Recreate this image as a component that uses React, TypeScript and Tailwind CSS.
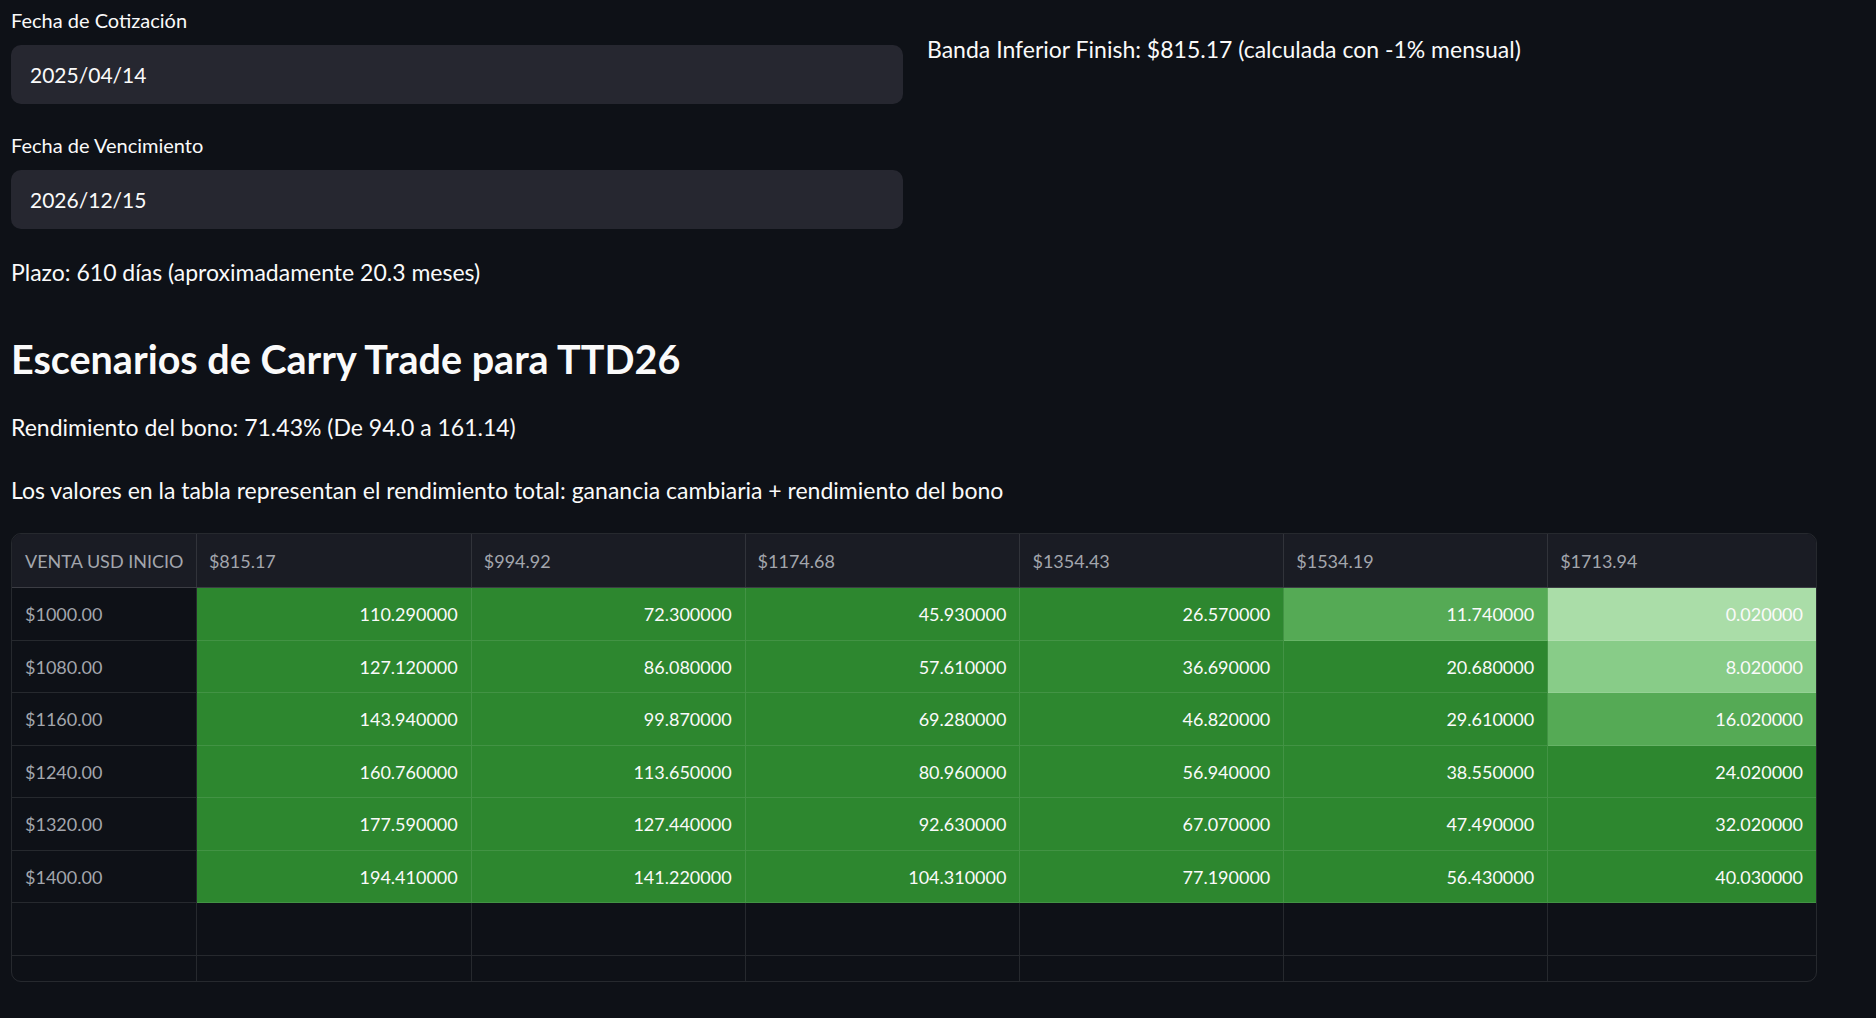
import React from "react";

const cols = ["$815.17", "$994.92", "$1174.68", "$1354.43", "$1534.19", "$1713.94"];
const widths = [185, 275, 274, 275, 264, 264, 268];

type Cell = { v: string; c: string };
const D = "bg-[#2d872f]";
const M = "bg-[#55aa55]";
const L1 = "bg-[#88cc88]";
const L2 = "bg-[#aadda8]";

const rows: { label: string; cells: Cell[] }[] = [
  {
    label: "$1000.00",
    cells: [
      { v: "110.290000", c: D },
      { v: "72.300000", c: D },
      { v: "45.930000", c: D },
      { v: "26.570000", c: D },
      { v: "11.740000", c: M },
      { v: "0.020000", c: L2 },
    ],
  },
  {
    label: "$1080.00",
    cells: [
      { v: "127.120000", c: D },
      { v: "86.080000", c: D },
      { v: "57.610000", c: D },
      { v: "36.690000", c: D },
      { v: "20.680000", c: D },
      { v: "8.020000", c: L1 },
    ],
  },
  {
    label: "$1160.00",
    cells: [
      { v: "143.940000", c: D },
      { v: "99.870000", c: D },
      { v: "69.280000", c: D },
      { v: "46.820000", c: D },
      { v: "29.610000", c: D },
      { v: "16.020000", c: M },
    ],
  },
  {
    label: "$1240.00",
    cells: [
      { v: "160.760000", c: D },
      { v: "113.650000", c: D },
      { v: "80.960000", c: D },
      { v: "56.940000", c: D },
      { v: "38.550000", c: D },
      { v: "24.020000", c: D },
    ],
  },
  {
    label: "$1320.00",
    cells: [
      { v: "177.590000", c: D },
      { v: "127.440000", c: D },
      { v: "92.630000", c: D },
      { v: "67.070000", c: D },
      { v: "47.490000", c: D },
      { v: "32.020000", c: D },
    ],
  },
  {
    label: "$1400.00",
    cells: [
      { v: "194.410000", c: D },
      { v: "141.220000", c: D },
      { v: "104.310000", c: D },
      { v: "77.190000", c: D },
      { v: "56.430000", c: D },
      { v: "40.030000", c: D },
    ],
  },
];

function Label({ children }: { children: React.ReactNode }) {
  return <div className="h-[41px] text-[20px] leading-[41px] text-[#fafafa]">{children}</div>;
}

function DateInput({ value }: { value: string }) {
  return (
    <div className="mt-[4px] flex h-[59px] items-center rounded-[10px] bg-[#262730] pl-[19px] text-[21px] text-[#fafafa]">
      {value}
    </div>
  );
}

export default function App() {
  return (
    <div
      className="min-h-screen w-full bg-[#0e1117] text-[#fafafa]"
      style={{ fontFamily: "Lato, 'Noto Sans', sans-serif" }}
    >
      <div className="w-[1818px] pl-[11px]">
        <div className="flex gap-[24px]">
          <div className="w-[892px]">
            <Label>Fecha de Cotización</Label>
            <DateInput value="2025/04/14" />
            <div className="mt-[21px]">
              <Label>Fecha de Vencimiento</Label>
            </div>
            <DateInput value="2026/12/15" />
            <div className="mt-[27px] h-[33px] text-[23px] leading-[33px]">
              Plazo: 610 días (aproximadamente 20.3 meses)
            </div>
          </div>
          <div className="flex-1 pt-[33px]">
            <div className="h-[33px] text-[23px] leading-[33px]">
              Banda Inferior Finish: $815.17 (calculada con -1% mensual)
            </div>
          </div>
        </div>

        <h3 className="mt-[45px] h-[50px] text-[39.5px] font-bold leading-[50px]">
          Escenarios de Carry Trade para TTD26
        </h3>
        <div className="mt-[27px] h-[33px] text-[23px] leading-[33px]">
          Rendimiento del bono: 71.43% (De 94.0 a 161.14)
        </div>
        <div className="mt-[30px] h-[33px] text-[23px] leading-[33px]">
          Los valores en la tabla representan el rendimiento total: ganancia cambiaria + rendimiento del bono
        </div>

        <div className="mt-[26px] h-[449px] w-[1806px] overflow-hidden rounded-[10px] border border-white/10 text-[18px]">
          <div className="flex h-[54px] border-b border-white/15 bg-[#1a1c24]">
            <div
              className="flex items-center border-r border-white/10 pl-[13px] pt-[1px] text-[#a3a6ad]"
              style={{ width: widths[0] }}
            >
              VENTA USD INICIO
            </div>
            {cols.map((c, i) => (
              <div
                key={c}
                className={`flex items-center pl-[12px] pt-[1px] text-[#a3a6ad] ${i < 5 ? "border-r border-white/10" : ""}`}
                style={{ width: widths[i + 1] }}
              >
                {c}
              </div>
            ))}
          </div>
          {rows.map((r) => (
            <div key={r.label} className="flex h-[52.5px]">
              <div
                className="flex items-center border-r border-b border-white/10 pl-[13px] pt-[2px] text-[#a3a6ad]"
                style={{ width: widths[0] }}
              >
                {r.label}
              </div>
              {r.cells.map((cell, i) => (
                <div
                  key={i}
                  className={`flex items-center justify-end border-b border-white/10 pr-[13px] pt-[2px] text-[#fafafa] ${cell.c} ${i < 5 ? "border-r" : ""}`}
                  style={{ width: widths[i + 1] }}
                >
                  {cell.v}
                </div>
              ))}
            </div>
          ))}
          {[53, 53].map((h, k) => (
            <div key={k} className="flex border-b border-white/10" style={{ height: h }}>
              {widths.map((w, i) => (
                <div
                  key={i}
                  className={i < 6 ? "border-r border-white/10" : ""}
                  style={{ width: w }}
                />
              ))}
            </div>
          ))}
        </div>
      </div>
    </div>
  );
}
